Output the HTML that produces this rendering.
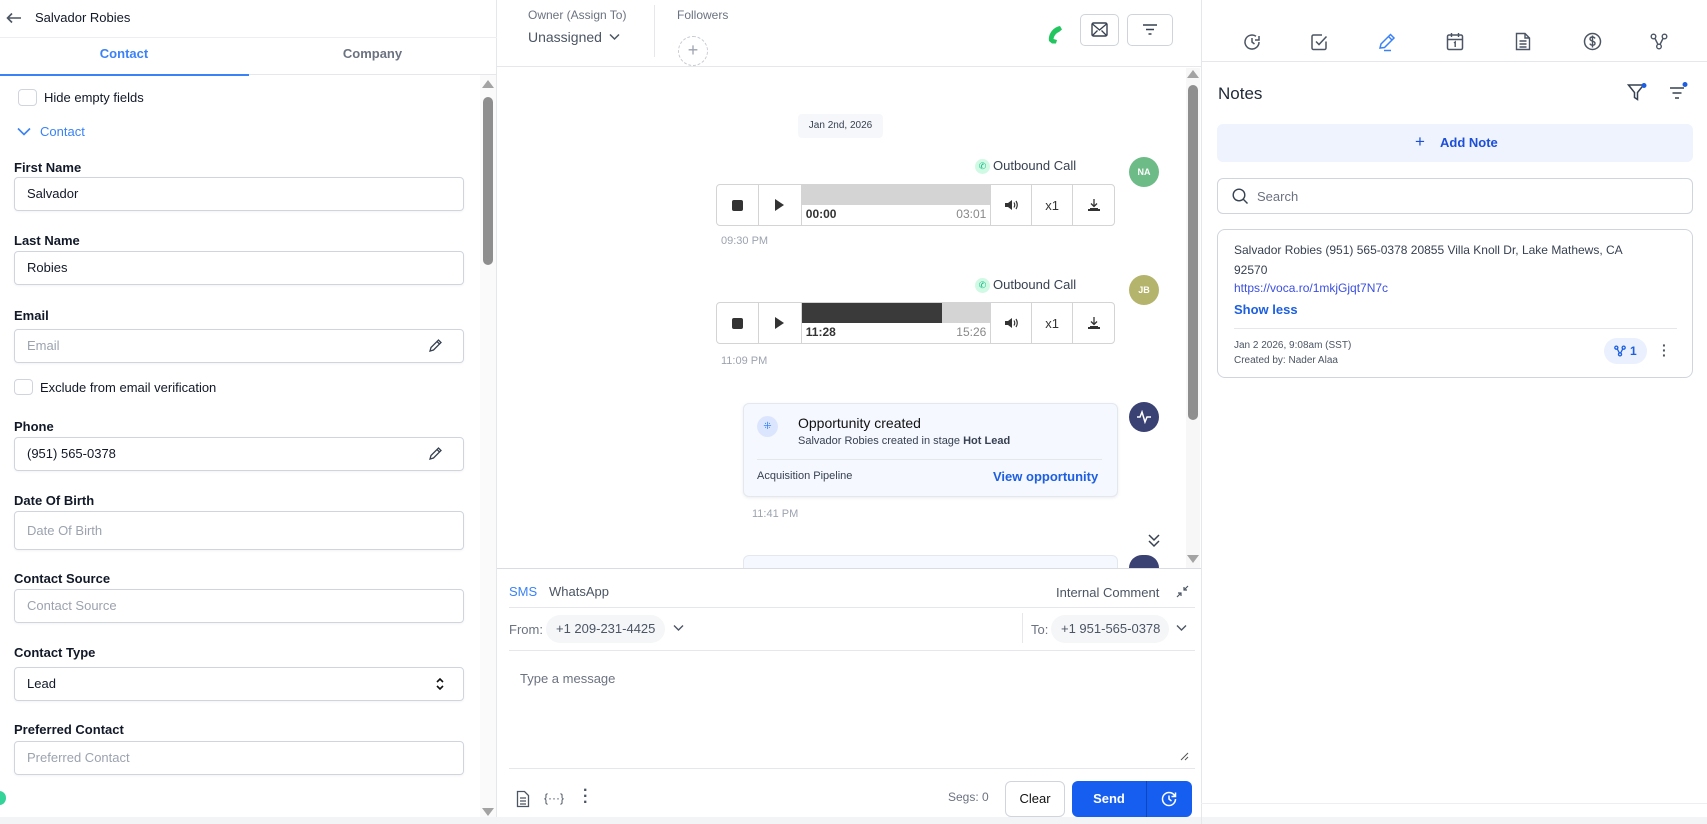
<!DOCTYPE html>
<html><head><meta charset="utf-8">
<style>
*{box-sizing:border-box;margin:0;padding:0}
body{width:1707px;height:824px;overflow:hidden;background:#fff;font-family:"Liberation Sans",sans-serif;color:#1f2937;position:relative}
.a{position:absolute}
.lbl{position:absolute;left:14px;font-size:13px;font-weight:bold;color:#111827}
.inp{position:absolute;left:14px;width:450px;height:34px;border:1px solid #d0d5dd;border-radius:4px;font-size:13px;padding-left:12px;line-height:32px;color:#111827;box-shadow:0 1px 2px rgba(0,0,0,.05)}
.ph{color:#9ca3af}
.cb{position:absolute;width:19px;height:17px;border:1px solid #d0d5dd;border-radius:4px}
.player{position:absolute;left:716px;width:399px;height:42px;border:1px solid #d4d4d4;border-radius:4px;display:flex;background:#fff}
.player .c{border-right:1px solid #d4d4d4;display:flex;align-items:center;justify-content:center;font-size:13px;color:#333}
.muted{color:#9ca3af;font-size:11px}
.av{position:absolute;width:30px;height:30px;border-radius:50%;color:#fff;font-size:9px;font-weight:bold;display:flex;align-items:center;justify-content:center}
</style></head><body>
<!-- LEFT PANEL -->
<div class="a" style="left:0;top:0;width:497px;height:824px;border-right:1px solid #e5e7eb"></div>
<svg class="a" style="left:6px;top:12px" width="16" height="12" viewBox="0 0 16 12"><path d="M15 6H2M6 1.5L1.5 6 6 10.5" fill="none" stroke="#4b5563" stroke-width="1.6"/></svg>
<div class="a" style="left:35px;top:10px;font-size:13px;color:#111827">Salvador Robies</div>
<div class="a" style="left:0;top:37px;width:497px;border-top:1px solid #eceef1"></div>
<div class="a" style="left:0;top:46px;width:248px;text-align:center;font-size:13px;font-weight:bold;color:#3b82f6">Contact</div>
<div class="a" style="left:248px;top:46px;width:249px;text-align:center;font-size:13px;font-weight:bold;color:#6b7280">Company</div>
<div class="a" style="left:0;top:74px;width:497px;border-top:1px solid #e5e7eb"></div>
<div class="a" style="left:0;top:74px;width:249px;border-top:2px solid #3b82f6"></div>
<!-- scrollbar -->
<div class="a" style="left:480px;top:75px;width:16px;height:742px;background:#fafafa"></div>
<div class="a" style="left:482px;top:80px;width:0;height:0;border-left:6px solid transparent;border-right:6px solid transparent;border-bottom:8px solid #a3a3a3"></div>
<div class="a" style="left:483px;top:97px;width:10px;height:168px;border-radius:5px;background:#8e8e8e"></div>
<div class="a" style="left:482px;top:808px;width:0;height:0;border-left:6px solid transparent;border-right:6px solid transparent;border-top:8px solid #a3a3a3"></div>

<div class="cb" style="left:18px;top:89px"></div>
<div class="a" style="left:44px;top:90px;font-size:13px;color:#111827">Hide empty fields</div>
<svg class="a" style="left:17px;top:127px" width="14" height="9" viewBox="0 0 14 9"><path d="M1 1.5l6 6 6-6" fill="none" stroke="#3b82f6" stroke-width="1.6"/></svg>
<div class="a" style="left:40px;top:124px;font-size:13px;color:#3b82f6">Contact</div>

<div class="lbl" style="top:160px">First Name</div>
<div class="inp" style="top:177px">Salvador</div>
<div class="lbl" style="top:233px">Last Name</div>
<div class="inp" style="top:251px">Robies</div>
<div class="lbl" style="top:308px">Email</div>
<div class="inp ph" style="top:329px">Email</div>
<svg class="a" style="left:427px;top:338px" width="16" height="16" viewBox="0 0 16 16"><path d="M3 13l1-3.5 7.5-7.5 2.5 2.5L6.5 12z M10 3.5l2.5 2.5" fill="none" stroke="#374151" stroke-width="1.3"/></svg>
<div class="cb" style="left:14px;top:379px;width:19px;height:16px"></div>
<div class="a" style="left:40px;top:380px;font-size:13px;color:#111827">Exclude from email verification</div>
<div class="lbl" style="top:419px">Phone</div>
<div class="inp" style="top:437px">(951) 565-0378</div>
<svg class="a" style="left:427px;top:446px" width="16" height="16" viewBox="0 0 16 16"><path d="M3 13l1-3.5 7.5-7.5 2.5 2.5L6.5 12z M10 3.5l2.5 2.5" fill="none" stroke="#374151" stroke-width="1.3"/></svg>
<div class="lbl" style="top:493px">Date Of Birth</div>
<div class="inp ph" style="top:511px;height:39px;line-height:37px">Date Of Birth</div>
<div class="lbl" style="top:571px">Contact Source</div>
<div class="inp ph" style="top:589px">Contact Source</div>
<div class="lbl" style="top:645px">Contact Type</div>
<div class="inp" style="top:667px">Lead</div>
<svg class="a" style="left:436px;top:677px" width="8" height="14" viewBox="0 0 8 14"><path d="M1 5l3-3 3 3M1 9l3 3 3-3" fill="none" stroke="#111" stroke-width="1.6"/></svg>
<div class="lbl" style="top:722px">Preferred Contact</div>
<div class="inp ph" style="top:741px">Preferred Contact</div>
<div class="a" style="left:-7px;top:791px;width:13px;height:14px;border-radius:50%;background:#34d399"></div>

<!-- MIDDLE HEADER -->
<div class="a" style="left:528px;top:8px;font-size:12px;color:#6b7280">Owner (Assign To)</div>
<div class="a" style="left:528px;top:29px;font-size:14px;color:#4b5563">Unassigned</div>
<svg class="a" style="left:609px;top:33px" width="11" height="8" viewBox="0 0 11 8"><path d="M1 1.5l4.5 4.5 4.5-4.5" fill="none" stroke="#4b5563" stroke-width="1.5"/></svg>
<div class="a" style="left:654px;top:5px;height:52px;border-left:1px solid #e5e7eb"></div>
<div class="a" style="left:677px;top:8px;font-size:12px;color:#6b7280">Followers</div>
<div class="a" style="left:678px;top:36px;width:30px;height:30px;border:1px dashed #c7cbd1;border-radius:50%;text-align:center;line-height:27px;color:#9ca3af;font-size:18px">+</div>
<svg class="a" style="left:1046px;top:24px" width="20" height="20" viewBox="0 0 20 20"><path d="M3 17C2 12 5 5 12 2.5L14 2l2 3.5-3 2.5C10 9 8 12 7.5 15L11 16 10 19.5 6 19.5z" fill="#22c55e"/></svg>
<div class="a" style="left:1080px;top:14px;width:39px;height:32px;border:1px solid #cfd4da;border-radius:5px"></div>
<svg class="a" style="left:1091px;top:22px" width="17" height="15" viewBox="0 0 17 15"><rect x="1" y="1" width="15" height="13" rx="1.5" fill="none" stroke="#374151" stroke-width="1.4"/><path d="M1.5 2l7 6 7-6M1.5 13.5l5-5M15.5 13.5l-5-5" fill="none" stroke="#374151" stroke-width="1.3"/></svg>
<div class="a" style="left:1127px;top:14px;width:46px;height:32px;border:1px solid #cfd4da;border-radius:5px"></div>
<svg class="a" style="left:1142px;top:23px" width="16" height="13" viewBox="0 0 16 13"><path d="M1 2h14M4 6.5h8M6.5 11h3" stroke="#374151" stroke-width="1.5"/></svg>
<div class="a" style="left:497px;top:66px;width:704px;border-top:1px solid #e5e7eb"></div>

<!-- middle scrollbar -->
<div class="a" style="left:1186px;top:68px;width:14px;height:500px;background:#f7f7f7"></div>
<div class="a" style="left:1187px;top:70px;width:0;height:0;border-left:6px solid transparent;border-right:6px solid transparent;border-bottom:8px solid #a3a3a3"></div>
<div class="a" style="left:1188px;top:85px;width:10px;height:335px;border-radius:5px;background:#8e8e8e"></div>
<div class="a" style="left:1187px;top:555px;width:0;height:0;border-left:6px solid transparent;border-right:6px solid transparent;border-top:8px solid #a3a3a3"></div>

<div class="a" style="left:798px;top:114px;width:85px;height:24px;background:#f5f7fa;border-radius:4px;font-size:10px;text-align:center;line-height:24px;color:#374151">Jan 2nd, 2026</div>

<!-- call 1 -->
<div class="a" style="left:975px;top:159px;width:15px;height:15px;border-radius:50%;background:#d1fae5;color:#10b981;font-size:9px;text-align:center;line-height:15px">✆</div>
<div class="a" style="left:993px;top:158px;font-size:13px;color:#374151">Outbound Call</div>
<div class="av" style="left:1129px;top:157px;background:#6dbb87">NA</div>
<div class="player" style="top:184px">
 <div class="c" style="width:42px"><div style="width:11px;height:11px;background:#333;border-radius:2px"></div></div>
 <div class="c" style="width:43px"><div style="width:0;height:0;border-top:6px solid transparent;border-bottom:6px solid transparent;border-left:9px solid #333"></div></div>
 <div class="c" style="width:190px;flex-direction:column;align-items:stretch;justify-content:flex-start">
  <div style="height:20px;background:#d4d4d4"></div>
  <div style="display:flex;justify-content:space-between;padding:2px 4px;font-size:12px"><b>00:00</b><span style="color:#888">03:01</span></div></div>
 <div class="c" style="width:41px"><svg width="14" height="12" viewBox="0 0 14 12"><path d="M1 4h3l4-3v10L4 8H1z" fill="#333"/><path d="M10 3.5q1.5 2.5 0 5M12 2q2.5 4 0 8" fill="none" stroke="#333" stroke-width="1.2"/></svg></div>
 <div class="c" style="width:41px">x1</div>
 <div class="c" style="width:41px;border-right:none"><svg width="14" height="14" viewBox="0 0 14 14"><path d="M7 1v7M4 5.5L7 8.5 10 5.5" fill="none" stroke="#333" stroke-width="1.3"/><path d="M1 11h12v2H1z M3 10h8v1H3z" fill="#333"/></svg></div>
</div>
<div class="a muted" style="left:721px;top:235px">09:30 PM</div>

<!-- call 2 -->
<div class="a" style="left:975px;top:278px;width:15px;height:15px;border-radius:50%;background:#d1fae5;color:#10b981;font-size:9px;text-align:center;line-height:15px">✆</div>
<div class="a" style="left:993px;top:277px;font-size:13px;color:#374151">Outbound Call</div>
<div class="av" style="left:1129px;top:275px;background:#b5b46c">JB</div>
<div class="player" style="top:302px">
 <div class="c" style="width:42px"><div style="width:11px;height:11px;background:#333;border-radius:2px"></div></div>
 <div class="c" style="width:43px"><div style="width:0;height:0;border-top:6px solid transparent;border-bottom:6px solid transparent;border-left:9px solid #333"></div></div>
 <div class="c" style="width:190px;flex-direction:column;align-items:stretch;justify-content:flex-start">
  <div style="height:20px;background:#d4d4d4"><div style="width:140px;height:20px;background:#3a3a3a"></div></div>
  <div style="display:flex;justify-content:space-between;padding:2px 4px;font-size:12px"><b>11:28</b><span style="color:#888">15:26</span></div></div>
 <div class="c" style="width:41px"><svg width="14" height="12" viewBox="0 0 14 12"><path d="M1 4h3l4-3v10L4 8H1z" fill="#333"/><path d="M10 3.5q1.5 2.5 0 5M12 2q2.5 4 0 8" fill="none" stroke="#333" stroke-width="1.2"/></svg></div>
 <div class="c" style="width:41px">x1</div>
 <div class="c" style="width:41px;border-right:none"><svg width="14" height="14" viewBox="0 0 14 14"><path d="M7 1v7M4 5.5L7 8.5 10 5.5" fill="none" stroke="#333" stroke-width="1.3"/><path d="M1 11h12v2H1z M3 10h8v1H3z" fill="#333"/></svg></div>
</div>
<div class="a muted" style="left:721px;top:355px">11:09 PM</div>

<!-- opportunity -->
<div class="a" style="left:743px;top:403px;width:375px;height:94px;background:#f5f8ff;border:1px solid #e3e8f0;border-radius:6px;box-shadow:0 1px 3px rgba(0,0,0,.08)"></div>
<div class="a" style="left:757px;top:416px;width:21px;height:21px;border-radius:50%;background:#dbe6fe;color:#3b82f6;font-size:10px;text-align:center;line-height:21px">⁜</div>
<div class="a" style="left:798px;top:415px;font-size:14px;color:#111">Opportunity created</div>
<div class="a" style="left:798px;top:435px;font-size:11px;color:#374151">Salvador Robies created in stage <b>Hot Lead</b></div>
<div class="a" style="left:757px;top:459px;width:345px;border-top:1px solid #e5e7eb"></div>
<div class="a" style="left:757px;top:470px;font-size:11px;color:#374151">Acquisition Pipeline</div>
<div class="a" style="left:993px;top:469px;font-size:13px;font-weight:bold;color:#1d5fe0">View opportunity</div>
<div class="av" style="left:1129px;top:402px;background:#3a4173"><svg width="16" height="14" viewBox="0 0 16 14"><path d="M1 7h3l2-5 3 10 2-5h4" fill="none" stroke="#fff" stroke-width="1.5"/></svg></div>
<div class="a muted" style="left:752px;top:508px">11:41 PM</div>
<svg class="a" style="left:1146px;top:533px" width="16" height="16" viewBox="0 0 16 16"><path d="M3 2l5 5 5-5M3 8l5 5 5-5" fill="none" stroke="#374151" stroke-width="1.5"/></svg>
<div class="a" style="left:743px;top:555px;width:375px;height:13px;background:#f5f8ff;border:1px solid #e3e8f0;border-bottom:none;border-radius:6px 6px 0 0"></div>
<div class="a" style="left:1129px;top:555px;width:30px;height:13px;background:#3a4173;border-radius:15px 15px 0 0"></div>

<!-- composer -->
<div class="a" style="left:497px;top:568px;width:704px;height:256px;background:#fff;border-top:1px solid #d9dce1"></div>
<div class="a" style="left:509px;top:584px;font-size:13px;color:#3b82f6">SMS</div>
<div class="a" style="left:549px;top:584px;font-size:13px;color:#4b5563">WhatsApp</div>
<div class="a" style="left:1056px;top:585px;font-size:13px;color:#4b5563">Internal Comment</div>
<svg class="a" style="left:1176px;top:585px" width="13" height="13" viewBox="0 0 13 13"><path d="M12 1L8 5M8 2v3h3M1 12l4-4M5 11V8H2" fill="none" stroke="#4b5563" stroke-width="1.2"/></svg>
<div class="a" style="left:509px;top:607px;width:686px;border-top:1px solid #e5e7eb"></div>
<div class="a" style="left:509px;top:622px;font-size:13px;color:#6b7280">From:</div>
<div class="a" style="left:546px;top:615px;width:119px;height:28px;border-radius:14px;background:#f5f6f8;font-size:13px;color:#4b5563;line-height:28px;padding-left:10px">+1 209-231-4425</div>
<svg class="a" style="left:673px;top:624px" width="11" height="8" viewBox="0 0 11 8"><path d="M1 1.5l4.5 4.5 4.5-4.5" fill="none" stroke="#4b5563" stroke-width="1.4"/></svg>
<div class="a" style="left:1022px;top:613px;height:30px;border-left:1px solid #e5e7eb"></div>
<div class="a" style="left:1031px;top:622px;font-size:13px;color:#6b7280">To:</div>
<div class="a" style="left:1051px;top:615px;width:118px;height:28px;border-radius:14px;background:#f5f6f8;font-size:13px;color:#4b5563;line-height:28px;padding-left:10px">+1 951-565-0378</div>
<svg class="a" style="left:1176px;top:624px" width="11" height="8" viewBox="0 0 11 8"><path d="M1 1.5l4.5 4.5 4.5-4.5" fill="none" stroke="#4b5563" stroke-width="1.4"/></svg>
<div class="a" style="left:509px;top:650px;width:686px;border-top:1px solid #e5e7eb"></div>
<div class="a" style="left:520px;top:671px;font-size:13px;color:#6b7280">Type a message</div>
<svg class="a" style="left:1180px;top:752px" width="9" height="9" viewBox="0 0 9 9"><path d="M1 8L8 1M5 8L8 5" stroke="#555" stroke-width="1"/></svg>
<div class="a" style="left:509px;top:768px;width:686px;border-top:1px solid #e5e7eb"></div>
<svg class="a" style="left:516px;top:790px" width="14" height="18" viewBox="0 0 14 18"><path d="M1.5 1.5h7l4 4v11h-11z M4 8h6M4 11h6M4 14h6" fill="none" stroke="#4b5563" stroke-width="1.3"/></svg>
<div class="a" style="left:544px;top:791px;font-size:12px;color:#4b5563">{···}</div>
<div class="a" style="left:583px;top:788px;font-size:16px;font-weight:bold;color:#4b5563;line-height:6px">·<br>·<br>·</div>
<div class="a" style="left:948px;top:790px;font-size:12px;color:#6b7280">Segs: 0</div>
<div class="a" style="left:1005px;top:781px;width:60px;height:36px;border:1px solid #d0d5dd;border-radius:6px;font-size:13px;text-align:center;line-height:34px;color:#111">Clear</div>
<div class="a" style="left:1072px;top:781px;width:120px;height:36px;border-radius:6px;background:#155eef"></div>
<div class="a" style="left:1072px;top:781px;width:74px;height:36px;font-size:13px;font-weight:bold;color:#fff;text-align:center;line-height:36px">Send</div>
<div class="a" style="left:1146px;top:781px;height:36px;border-left:1px solid #0d47c0"></div>
<svg class="a" style="left:1160px;top:790px" width="18" height="18" viewBox="0 0 18 18"><path d="M15.5 9A6.5 6.5 0 1 1 9 2.5a6.5 6.5 0 0 1 6 4M15.5 2.5v4h-4M9 5.5V9l2.5 2" fill="none" stroke="#fff" stroke-width="1.5"/></svg>
<div class="a" style="left:0;top:817px;width:1707px;height:7px;background:#f3f4f6"></div>

<!-- RIGHT PANEL -->
<div class="a" style="left:1201px;top:0;height:824px;border-left:1px solid #e5e7eb"></div>
<div class="a" style="left:1201px;top:61px;width:506px;border-top:1px solid #e5e7eb"></div>
<svg class="a" style="left:1243px;top:33px" width="18" height="18" viewBox="0 0 18 18"><path d="M16 9A7 7 0 1 1 13 3.3M16 3v4h-4M9 5v4l2.5 2" fill="none" stroke="#4b5563" stroke-width="1.5"/></svg>
<svg class="a" style="left:1310px;top:33px" width="18" height="18" viewBox="0 0 18 18"><path d="M16 8.5V15a1.5 1.5 0 0 1-1.5 1.5h-11A1.5 1.5 0 0 1 2 15V3.5A1.5 1.5 0 0 1 3.5 2H12M6 8.5l3 3 7.5-8" fill="none" stroke="#4b5563" stroke-width="1.5"/></svg>
<svg class="a" style="left:1377px;top:32px" width="20" height="20" viewBox="0 0 20 20"><path d="M3 16l1-4L13.5 2.5l3.5 3.5L7.5 15.5zM11.5 4.5l3.5 3.5M7 18.5h7" fill="none" stroke="#3b82f6" stroke-width="1.5"/></svg>
<svg class="a" style="left:1446px;top:32px" width="18" height="19" viewBox="0 0 18 19"><rect x="1.5" y="3" width="15" height="14.5" rx="1.5" fill="none" stroke="#4b5563" stroke-width="1.5"/><path d="M1.5 7.5h15M5.5 1v4M12.5 1v4M8 11l1.2-1v5" fill="none" stroke="#4b5563" stroke-width="1.4"/></svg>
<svg class="a" style="left:1515px;top:32px" width="16" height="19" viewBox="0 0 16 19"><path d="M1.5 1.5h8.5l4.5 4.5v11.5h-13zM10 1.5v4.5h4.5M4.5 9h7M4.5 12h7M4.5 15h7" fill="none" stroke="#4b5563" stroke-width="1.4"/></svg>
<svg class="a" style="left:1583px;top:32px" width="19" height="19" viewBox="0 0 19 19"><circle cx="9.5" cy="9.5" r="8" fill="none" stroke="#4b5563" stroke-width="1.5"/><path d="M12 6.5c-.5-1-1.5-1.5-2.5-1.5-1.5 0-2.5.8-2.5 2 0 2.8 5 1.5 5 4.2 0 1.2-1 2-2.5 2-1.2 0-2.2-.6-2.6-1.6M9.5 3.5v12" fill="none" stroke="#4b5563" stroke-width="1.4"/></svg>
<svg class="a" style="left:1650px;top:33px" width="18" height="17" viewBox="0 0 18 17"><circle cx="3.5" cy="3.5" r="2.3" fill="none" stroke="#4b5563" stroke-width="1.4"/><circle cx="14.5" cy="3.5" r="2.3" fill="none" stroke="#4b5563" stroke-width="1.4"/><circle cx="9" cy="13.5" r="2.3" fill="none" stroke="#4b5563" stroke-width="1.4"/><path d="M5 5.5l3 6M13 5.5l-3 6" stroke="#4b5563" stroke-width="1.4"/></svg>

<div class="a" style="left:1218px;top:84px;font-size:17px;color:#1f2937">Notes</div>
<svg class="a" style="left:1627px;top:83px" width="20" height="19" viewBox="0 0 20 19"><path d="M1.5 2h15l-6 7.5v7l-3-2v-5z" fill="none" stroke="#374151" stroke-width="1.5"/><circle cx="17" cy="2.5" r="2.5" fill="#1d5fe0"/></svg>
<svg class="a" style="left:1668px;top:82px" width="20" height="19" viewBox="0 0 20 19"><path d="M2 6h14M4.5 11h9M7 16h4" stroke="#374151" stroke-width="1.5"/><circle cx="17" cy="2.5" r="2.5" fill="#1d5fe0"/></svg>

<div class="a" style="left:1217px;top:124px;width:476px;height:38px;background:#eef3fd;border-radius:6px"></div>
<div class="a" style="left:1415px;top:132px;font-size:17px;color:#1d4ed8">+</div>
<div class="a" style="left:1440px;top:135px;font-size:13px;font-weight:bold;color:#1d4ed8">Add Note</div>

<div class="a" style="left:1217px;top:178px;width:476px;height:36px;border:1px solid #d0d5dd;border-radius:6px"></div>
<svg class="a" style="left:1232px;top:188px" width="17" height="17" viewBox="0 0 17 17"><circle cx="7" cy="7" r="5.8" fill="none" stroke="#374151" stroke-width="1.4"/><path d="M11.3 11.3L15.5 15.5" stroke="#374151" stroke-width="1.4"/></svg>
<div class="a" style="left:1257px;top:189px;font-size:13px;color:#6b7280">Search</div>

<div class="a" style="left:1217px;top:229px;width:476px;height:149px;border:1px solid #d0d5dd;border-radius:8px"></div>
<div class="a" style="left:1234px;top:240px;width:405px;font-size:12px;line-height:20px;color:#374151">Salvador Robies (951) 565-0378 20855 Villa Knoll Dr, Lake Mathews, CA 92570</div>
<div class="a" style="left:1234px;top:281px;font-size:12px;color:#3b4fe0">https://voca.ro/1mkjGjqt7N7c</div>
<div class="a" style="left:1234px;top:302px;font-size:13px;font-weight:bold;color:#1d5fe0">Show less</div>
<div class="a" style="left:1234px;top:328px;width:443px;border-top:1px solid #e5e7eb"></div>
<div class="a" style="left:1234px;top:338px;font-size:10px;color:#4b5563;line-height:15px">Jan 2 2026, 9:08am (SST)<br>Created by: Nader Alaa</div>
<div class="a" style="left:1604px;top:338px;width:43px;height:26px;border-radius:13px;background:#eaf0fd"></div>
<svg class="a" style="left:1614px;top:345px" width="12" height="12" viewBox="0 0 18 17"><circle cx="3.5" cy="3.5" r="2.3" fill="none" stroke="#1d5fe0" stroke-width="2"/><circle cx="14.5" cy="3.5" r="2.3" fill="none" stroke="#1d5fe0" stroke-width="2"/><circle cx="9" cy="13.5" r="2.3" fill="none" stroke="#1d5fe0" stroke-width="2"/><path d="M5 5.5l3 6M13 5.5l-3 6" stroke="#1d5fe0" stroke-width="2"/></svg>
<div class="a" style="left:1630px;top:344px;font-size:12px;font-weight:bold;color:#1d5fe0">1</div>
<div class="a" style="left:1662px;top:343px;font-size:14px;font-weight:bold;color:#4b5563;line-height:5px">·<br>·<br>·</div>
<div class="a" style="left:1201px;top:803px;width:506px;border-top:1px solid #eceef1"></div>
</body></html>
